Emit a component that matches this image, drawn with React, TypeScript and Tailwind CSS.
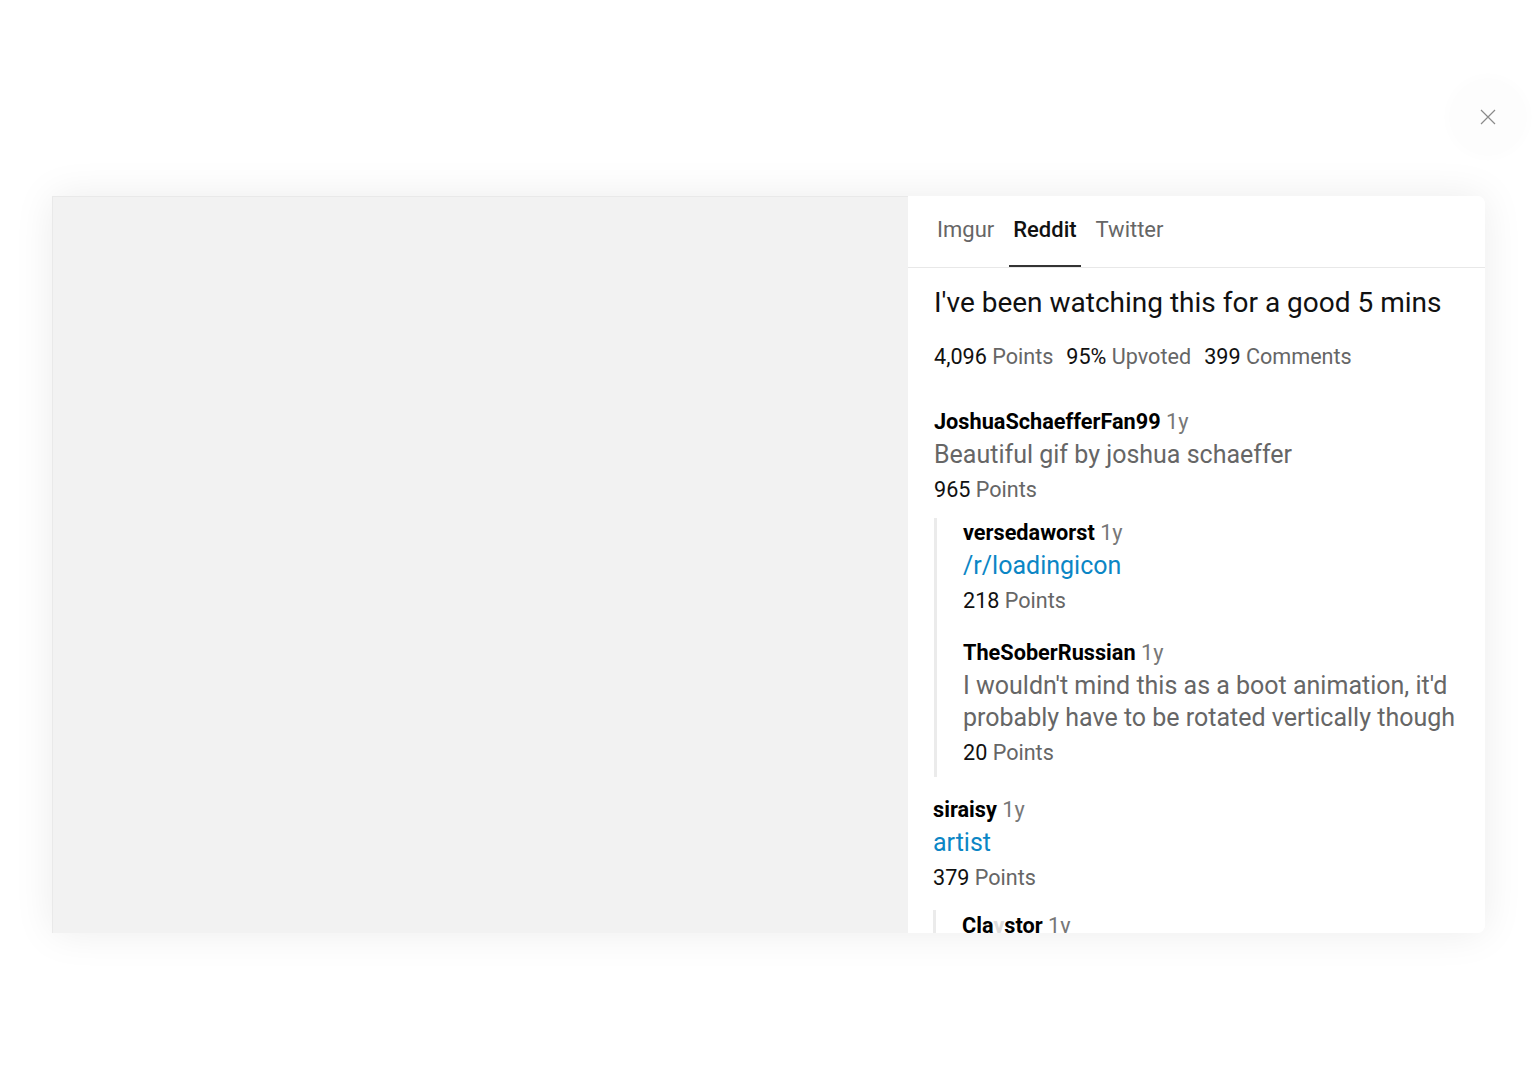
import React from "react";

const font = { fontFamily: "Roboto, 'Noto Sans', Arial, sans-serif" };

function Meta({ n, label }: { n: string; label: string }) {
  return (
    <span className="mr-[13px]">
      <span className="text-[#111]">{n}</span>{" "}
      <span className="text-[#666]">{label}</span>
    </span>
  );
}

function User({ name }: { name: React.ReactNode }) {
  return (
    <div className="h-[30px] whitespace-nowrap text-[21.7px] leading-[30px]">
      <span className="font-bold text-[#000]">{name}</span>{" "}
      <span className="text-[#777]">1y</span>
    </div>
  );
}

function Points({ n }: { n: string }) {
  return (
    <div className="mt-[4px] h-[30px] text-[21.6px] leading-[30px]">
      <span className="text-[#111]">{n}</span>{" "}
      <span className="text-[#666]">Points</span>
    </div>
  );
}

function Body({ children, link }: { children: React.ReactNode; link?: boolean }) {
  return (
    <div
      className={
        "mt-[2px] text-[25px] leading-[32px] " +
        (link ? "text-[#0b86c5]" : "text-[#666]")
      }
    >
      {children}
    </div>
  );
}

export default function App() {
  return (
    <div className="relative min-h-[1071px] w-full bg-white" style={font}>
      <button className="absolute left-[1452px] top-[81px] flex h-[72px] w-[72px] items-center justify-center rounded-full bg-[#fdfdfd] shadow-[0_0_18px_rgba(0,0,0,0.025)]">
        <svg width="18" height="18" viewBox="0 0 18 18" fill="none">
          <path d="M2 2L16 16M16 2L2 16" stroke="#8a8a8a" strokeWidth="1.2" />
        </svg>
      </button>
      <div className="pt-[196px] pl-[52px]">
        <div className="flex h-[737px] w-[1433px] rounded-r-[8px] shadow-[0_0_40px_rgba(0,0,0,0.08)]">
          <div className="w-[856px] border-l border-t border-[#e9e9e9] bg-[#f2f2f2]" />
          <div className="flex w-[577px] flex-col overflow-hidden rounded-r-[8px] bg-white">
            <div className="flex h-[72px] shrink-0 items-stretch gap-[11px] border-b border-[#e8e8e8] pl-[25px]">
              <div className="flex items-center px-[4px] pb-[4px] text-[22px] text-[#666]">Imgur</div>
              <div className="relative flex items-center px-[4px] pb-[4px] text-[22px] font-medium text-[#111]">
                Reddit
                <div className="absolute bottom-0 left-0 right-0 h-[2px] bg-[#333]" />
              </div>
              <div className="flex items-center px-[4px] pb-[4px] text-[22px] text-[#666]">Twitter</div>
            </div>
            <div className="flex-1 overflow-hidden pl-[26px] pr-[20px] pt-[17px]">
              <div className="h-[36px] whitespace-nowrap text-[28px] leading-[36px] text-[#111]">
                I've been watching this for a good 5 mins
              </div>
              <div className="mt-[21px] h-[30px] whitespace-nowrap text-[21.6px] leading-[30px]">
                <Meta n="4,096" label="Points" />
                <Meta n="95%" label="Upvoted" />
                <Meta n="399" label="Comments" />
              </div>

              <div className="mt-[35px]">
                <User name="JoshuaSchaefferFan99" />
                <Body>Beautiful gif by joshua schaeffer</Body>
                <Points n="965" />
                <div className="mt-[13px] border-l-[3px] border-[#ebebeb] pb-[9px] pl-[26px]">
                  <User name="versedaworst" />
                  <Body link>/r/loadingicon</Body>
                  <Points n="218" />
                  <div className="mt-[22px]">
                    <User name="TheSoberRussian" />
                    <Body>
                      I wouldn't mind this as a boot animation, it'd probably have to be rotated
                      vertically though
                    </Body>
                    <Points n="20" />
                  </div>
                </div>
              </div>

              <div className="-ml-[1px] mt-[18px]">
                <User name="siraisy" />
                <div className="mt-[1px]">
                  <Body link>artist</Body>
                </div>
                <div className="mt-[3px]">
                  <Points n="379" />
                </div>
                <div className="mt-[17px] border-l-[3px] border-[#ebebeb] pl-[26px] pt-[1px]">
                  <User
                    name={
                      <>
                        Cla<span className="text-[#ddd]">y</span>stor
                      </>
                    }
                  />
                  <Body>...</Body>
                </div>
              </div>
            </div>
          </div>
        </div>
      </div>
    </div>
  );
}
